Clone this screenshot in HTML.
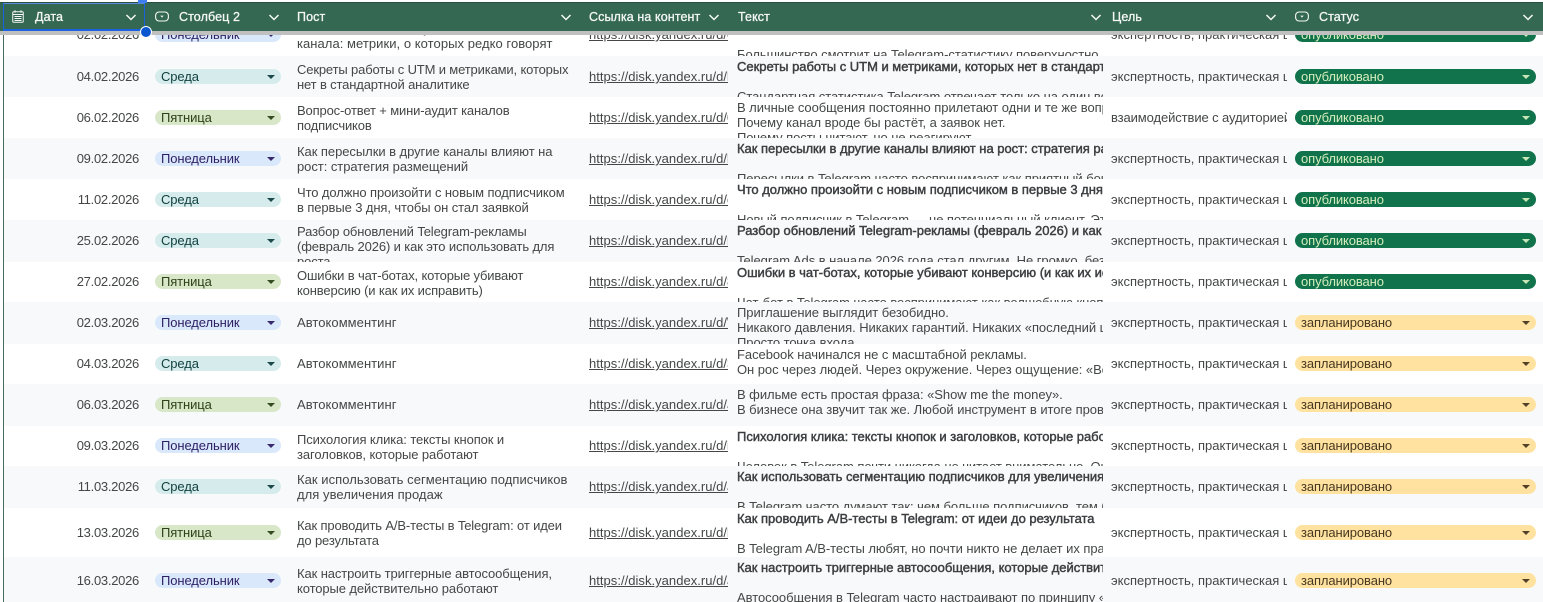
<!DOCTYPE html>
<html lang="ru"><head><meta charset="utf-8"><title>Контент-план</title>
<style>
*{box-sizing:border-box}
html,body{margin:0;padding:0;width:1543px;height:602px;overflow:hidden;background:#fff}
body{position:relative;font-family:"Liberation Sans",Arial,sans-serif;font-size:13px;color:#444746}
.r{position:absolute;left:4px;width:1539px;overflow:hidden}
.g{background:#f8f9fa}
.r>div{position:absolute;top:0;height:100%;overflow:hidden}
.e>.d,.e>.l,.e>.o,.e>.cw,.e>.sw{height:calc(100% - 1px)}
.d{left:0;width:135px;display:flex;align-items:center;justify-content:flex-end;white-space:nowrap;letter-spacing:-.28px}
.c{position:absolute;top:50%;margin-top:-7.5px;height:15px;border-radius:8px;line-height:16px;padding-left:6px;white-space:nowrap;overflow:hidden}
.c:after{content:"";position:absolute;right:6px;top:5.5px;border:4px solid transparent;border-bottom:0;border-top:4.5px solid currentColor;opacity:.95}
.cw{left:151px;width:126px;overflow:visible!important}
.cw .c{left:0;width:126px;letter-spacing:-.1px}
.m{background:#d9e8fb;color:#2e1f63}
.w{background:#d6ecec;color:#124040}
.f{background:#d9e7c9;color:#2c4218}
.p{left:293px;width:285px;display:flex;align-items:center;line-height:15px;letter-spacing:.05px;padding-top:1px}
.p.t{align-items:flex-start;padding-top:4px}
.p span{display:block}
.p span.s{position:relative;top:-1px}
.l{left:585px;width:139px;display:flex;align-items:center;white-space:nowrap;text-decoration:underline;letter-spacing:.03px}
.x{left:733px;width:366px;white-space:pre;line-height:15.2px;padding-top:2.6px;letter-spacing:-.05px}
.x b{color:#3c3f41;font-weight:400;-webkit-text-stroke:.45px #3c3f41;letter-spacing:-.02px}
.o{left:1107px;width:176px;display:flex;align-items:center;white-space:nowrap;letter-spacing:0}
.sw{left:1291px;width:241px;overflow:visible!important}
.sw .c{left:0;width:241px;letter-spacing:-.1px}
.pub{background:#10734b;color:#d4edbc}
.pln{background:#ffe29f;color:#473821}
#hd{position:absolute;left:0;top:2px;width:1543px;height:29px;background:#356853;color:#f4f7f5;font-size:12.5px;-webkit-text-stroke:.3px #f4f7f5;line-height:30px}
#hd span{position:absolute;top:0;white-space:nowrap;letter-spacing:.1px}
#hd svg{position:absolute}
#sh{position:absolute;left:0;top:31px;width:1543px;height:4px;background:#bfc0bf}
#vl{position:absolute;left:3px;top:0;width:1px;height:602px;background:#4a6b5c}
</style></head><body>

<div class="r e" style="top:14px;height:42px"><div class="d">02.02.2026</div><div class="cw"><div class="c m">Понедельник</div></div><div class="p"><span>Как читать статистику своего<br>канала: метрики, о которых редко говорят</span></div><div class="l">https://disk.yandex.ru/d/0</div><div class="x"><b>Как читать статистику своего канала: метрики</b>

Большинство смотрит на Telegram-статистику поверхностно</div><div class="o">экспертность, практическая ц</div><div class="sw"><div class="c pub">опубликовано</div></div></div>

<div class="r g" style="top:56px;height:41px"><div class="d">04.02.2026</div><div class="cw"><div class="c w">Среда</div></div><div class="p"><span style="letter-spacing:-.15px">Секреты работы с UTM и метриками, которых<br>нет в стандартной аналитике</span></div><div class="l">https://disk.yandex.ru/d/l</div><div class="x"><b>Секреты работы с UTM и метриками, которых нет в стандартной</b>

Стандартная статистика Telegram отвечает только на один вопрос</div><div class="o">экспертность, практическая ц</div><div class="sw"><div class="c pub">опубликовано</div></div></div>

<div class="r" style="top:97px;height:41px"><div class="d">06.02.2026</div><div class="cw"><div class="c f">Пятница</div></div><div class="p"><span style="letter-spacing:-.15px">Вопрос-ответ + мини-аудит каналов<br>подписчиков</span></div><div class="l">https://disk.yandex.ru/d/0</div><div class="x">В личные сообщения постоянно прилетают одни и те же вопросы
Почему канал вроде бы растёт, а заявок нет.
Почему посты читают, но не реагируют.</div><div class="o" style="letter-spacing:-.1px">взаимодействие с аудиторией ц</div><div class="sw"><div class="c pub">опубликовано</div></div></div>

<div class="r g" style="top:138px;height:41px"><div class="d">09.02.2026</div><div class="cw"><div class="c m">Понедельник</div></div><div class="p"><span style="letter-spacing:-.05px">Как пересылки в другие каналы влияют на<br>рост: стратегия размещений</span></div><div class="l">https://disk.yandex.ru/d/l</div><div class="x"><b>Как пересылки в другие каналы влияют на рост: стратегия размещений</b>

Пересылки в Telegram часто воспринимают как приятный бонус</div><div class="o">экспертность, практическая ц</div><div class="sw"><div class="c pub">опубликовано</div></div></div>

<div class="r" style="top:179px;height:41px"><div class="d">11.02.2026</div><div class="cw"><div class="c w">Среда</div></div><div class="p"><span style="letter-spacing:-.1px">Что должно произойти с новым подписчиком<br>в первые 3 дня, чтобы он стал заявкой</span></div><div class="l">https://disk.yandex.ru/d/c</div><div class="x"><b>Что должно произойти с новым подписчиком в первые 3 дня, чтобы</b>

Новый подписчик в Telegram — не потенциальный клиент. Это</div><div class="o">экспертность, практическая ц</div><div class="sw"><div class="c pub">опубликовано</div></div></div>

<div class="r g e" style="top:220px;height:42px"><div class="d">25.02.2026</div><div class="cw"><div class="c w">Среда</div></div><div class="p t"><span style="letter-spacing:-.12px">Разбор обновлений Telegram-рекламы<br>(февраль 2026) и как это использовать для<br>роста</span></div><div class="l">https://disk.yandex.ru/d/r</div><div class="x"><b>Разбор обновлений Telegram-рекламы (февраль 2026) и как это</b>

Telegram Ads в начале 2026 года стал другим. Не громко, без анонсов</div><div class="o">экспертность, практическая ц</div><div class="sw"><div class="c pub">опубликовано</div></div></div>

<div class="r e" style="top:262px;height:40px"><div class="d">27.02.2026</div><div class="cw"><div class="c f">Пятница</div></div><div class="p"><span style="letter-spacing:-.15px">Ошибки в чат-ботах, которые убивают<br>конверсию (и как их исправить)</span></div><div class="l">https://disk.yandex.ru/d/8</div><div class="x"><b>Ошибки в чат-ботах, которые убивают конверсию (и как их исправить)</b>

Чат-бот в Telegram часто воспринимают как волшебную кнопку</div><div class="o">экспертность, практическая ц</div><div class="sw"><div class="c pub">опубликовано</div></div></div>

<div class="r g e" style="top:302px;height:42px"><div class="d">02.03.2026</div><div class="cw"><div class="c m">Понедельник</div></div><div class="p"><span class="s">Автокомментинг</span></div><div class="l">https://disk.yandex.ru/d/\</div><div class="x">Приглашение выглядит безобидно.
Никакого давления. Никаких гарантий. Никаких «последний шанс»
Просто точка входа.</div><div class="o">экспертность, практическая ц</div><div class="sw"><div class="c pln">запланировано</div></div></div>

<div class="r e" style="top:344px;height:40px"><div class="d">04.03.2026</div><div class="cw"><div class="c w">Среда</div></div><div class="p"><span class="s">Автокомментинг</span></div><div class="l">https://disk.yandex.ru/d/3</div><div class="x">Facebook начинался не с масштабной рекламы.
Он рос через людей. Через окружение. Через ощущение: «Все там»</div><div class="o">экспертность, практическая ц</div><div class="sw"><div class="c pln">запланировано</div></div></div>

<div class="r g e" style="top:384px;height:42px"><div class="d">06.03.2026</div><div class="cw"><div class="c f">Пятница</div></div><div class="p"><span class="s">Автокомментинг</span></div><div class="l">https://disk.yandex.ru/d/J</div><div class="x">В фильме есть простая фраза: «Show me the money».
В бизнесе она звучит так же. Любой инструмент в итоге проверяется</div><div class="o">экспертность, практическая ц</div><div class="sw"><div class="c pln">запланировано</div></div></div>

<div class="r e" style="top:426px;height:40px"><div class="d">09.03.2026</div><div class="cw"><div class="c m">Понедельник</div></div><div class="p"><span style="letter-spacing:-.1px">Психология клика: тексты кнопок и<br>заголовков, которые работают</span></div><div class="l">https://disk.yandex.ru/d/i</div><div class="x"><b>Психология клика: тексты кнопок и заголовков, которые работают</b>

Человек в Telegram почти никогда не читает внимательно. Он</div><div class="o">экспертность, практическая ц</div><div class="sw"><div class="c pln">запланировано</div></div></div>

<div class="r g e" style="top:466px;height:42px"><div class="d">11.03.2026</div><div class="cw"><div class="c w">Среда</div></div><div class="p"><span class="s">Как использовать сегментацию подписчиков<br>для увеличения продаж</span></div><div class="l">https://disk.yandex.ru/d/J</div><div class="x"><b>Как использовать сегментацию подписчиков для увеличения продаж</b>

В Telegram часто думают так: чем больше подписчиков, тем больше</div><div class="o">экспертность, практическая ц</div><div class="sw"><div class="c pln">запланировано</div></div></div>

<div class="r" style="top:508px;height:49px"><div class="d">13.03.2026</div><div class="cw"><div class="c f">Пятница</div></div><div class="p"><span style="letter-spacing:-.15px">Как проводить A/B-тесты в Telegram: от идеи<br>до результата</span></div><div class="l">https://disk.yandex.ru/d/l</div><div class="x"><b>Как проводить A/B-тесты в Telegram: от идеи до результата</b>

В Telegram A/B-тесты любят, но почти никто не делает их правильно</div><div class="o">экспертность, практическая ц</div><div class="sw"><div class="c pln">запланировано</div></div></div>

<div class="r g" style="top:557px;height:47px"><div class="d">16.03.2026</div><div class="cw"><div class="c m">Понедельник</div></div><div class="p"><span style="letter-spacing:-.1px">Как настроить триггерные автосообщения,<br>которые действительно работают</span></div><div class="l">https://disk.yandex.ru/d/J</div><div class="x"><b>Как настроить триггерные автосообщения, которые действительно</b>

Автосообщения в Telegram часто настраивают по принципу «поставил</div><div class="o">экспертность, практическая ц</div><div class="sw"><div class="c pln">запланировано</div></div></div>

<div id="vl"></div>
<div id="sh"></div>
<div id="hd">
<svg style="left:12px;top:8px" width="12" height="13" viewBox="0 0 12 13" fill="none" stroke="#f4f7f5"><rect x=".75" y="1.75" width="10.5" height="10.5" rx="1"/><path d="M.75 4.5h10.5M3 .3v2.5M9 .3v2.5M2.5 6.5h7M2.5 8.5h7M2.5 10.5h7" /></svg>
<span style="left:35px">Дата</span>
<svg style="left:125px;top:12px" width="12" height="7" viewBox="0 0 12 7" fill="none" stroke="#f4f7f5" stroke-width="1.5"><path d="M1.5 1l4.5 4.5L10.5 1"/></svg>
<svg style="left:155px;top:9px" width="14" height="11" viewBox="0 0 14 11" fill="none" stroke="#f4f7f5" stroke-width="1.1"><rect x=".6" y="1" width="12.8" height="9" rx="3.5"/><path d="M5.3 4.6h3.4L7 6.6z" fill="#f4f7f5" stroke="none"/></svg>
<span style="left:179px">Столбец 2</span>
<svg style="left:268px;top:12px" width="12" height="7" viewBox="0 0 12 7" fill="none" stroke="#f4f7f5" stroke-width="1.5"><path d="M1.5 1l4.5 4.5L10.5 1"/></svg>
<span style="left:297px">Пост</span>
<svg style="left:560px;top:12px" width="12" height="7" viewBox="0 0 12 7" fill="none" stroke="#f4f7f5" stroke-width="1.5"><path d="M1.5 1l4.5 4.5L10.5 1"/></svg>
<span style="left:589px">Ссылка на контент</span>
<svg style="left:708px;top:12px" width="12" height="7" viewBox="0 0 12 7" fill="none" stroke="#f4f7f5" stroke-width="1.5"><path d="M1.5 1l4.5 4.5L10.5 1"/></svg>
<span style="left:738px">Текст</span>
<svg style="left:1090px;top:12px" width="12" height="7" viewBox="0 0 12 7" fill="none" stroke="#f4f7f5" stroke-width="1.5"><path d="M1.5 1l4.5 4.5L10.5 1"/></svg>
<span style="left:1112px">Цель</span>
<svg style="left:1265px;top:12px" width="12" height="7" viewBox="0 0 12 7" fill="none" stroke="#f4f7f5" stroke-width="1.5"><path d="M1.5 1l4.5 4.5L10.5 1"/></svg>
<svg style="left:1295px;top:9px" width="14" height="11" viewBox="0 0 14 11" fill="none" stroke="#f4f7f5" stroke-width="1.1"><rect x=".6" y="1" width="12.8" height="9" rx="3.5"/><path d="M5.3 4.6h3.4L7 6.6z" fill="#f4f7f5" stroke="none"/></svg>
<span style="left:1319px">Статус</span>
<svg style="left:1522px;top:12px" width="12" height="7" viewBox="0 0 12 7" fill="none" stroke="#f4f7f5" stroke-width="1.5"><path d="M1.5 1l4.5 4.5L10.5 1"/></svg>
</div>
<div style="position:absolute;left:0;top:0;width:1543px;height:2px;background:#fff"></div>
<div style="position:absolute;left:0;top:2px;width:1543px;height:1px;background:#2a4f40"></div>
<div style="position:absolute;left:3px;top:3px;width:142px;height:28px;border:1px solid #1a62e0;border-bottom-width:2px;border-top-color:#5a8ad8"></div>
<div style="position:absolute;left:138px;top:0;width:9px;height:3px;background:#3f7ef0"></div>
<div style="position:absolute;left:140px;top:26px;width:12px;height:12px;border-radius:50%;background:#0b57d0;border:1px solid #fff"></div>
</body></html>
